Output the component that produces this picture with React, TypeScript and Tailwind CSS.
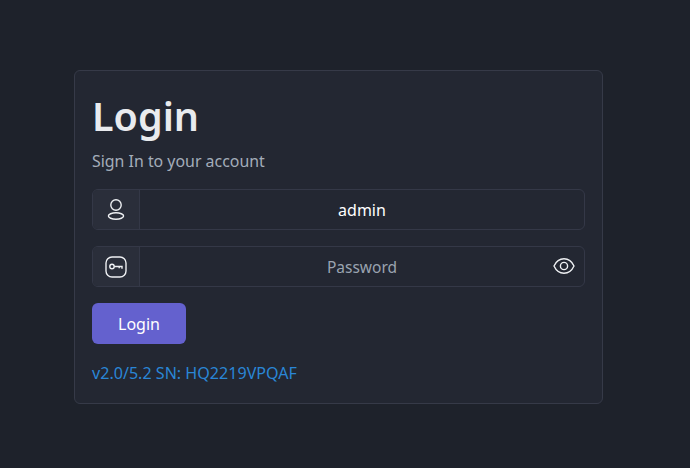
import { useState } from 'react'

function UserIcon() {
  return (
    <svg width="20" height="24" viewBox="0 0 20 24" fill="none" stroke="currentColor" strokeWidth="1.4">
      <circle cx="10" cy="7" r="5.2" />
      <ellipse cx="10" cy="18" rx="7.6" ry="3.2" />
    </svg>
  )
}

function KeyIcon() {
  return (
    <svg width="22" height="22" viewBox="0 0 22 22" fill="none" stroke="currentColor" strokeWidth="1.4">
      <rect x="1" y="1" width="20" height="20" rx="6" />
      <circle cx="7" cy="10.5" r="2.2" />
      <path d="M9.2 10.5H17V12.7M14.2 10.5V12.3" />
    </svg>
  )
}

function EyeIcon() {
  return (
    <svg width="22" height="18" viewBox="0 0 22 18" fill="none" stroke="currentColor" strokeWidth="1.4">
      <path d="M1 9C3.2 4.2 6.8 1.8 11 1.8S18.8 4.2 21 9C18.8 13.8 15.2 16.2 11 16.2S3.2 13.8 1 9Z" />
      <circle cx="11" cy="9" r="3.6" />
    </svg>
  )
}

export default function App() {
  const [password, setPassword] = useState('')
  const [username, setUsername] = useState('admin')
  const [showPassword, setShowPassword] = useState(false)

  return (
    <div className="h-[468px] w-[690px] overflow-hidden bg-[#1e222b] pl-[74px] pt-[70px] font-['Noto_Sans',sans-serif]">
      <div className="h-[334px] w-[529px] rounded-md border border-[#363a48] bg-[#232732] px-[17px] pt-[17px]">
        <h1 className="text-[39.5px] leading-[56px] font-semibold text-[#e9ebee]">Login</h1>
        <p className="mt-[5px] text-[15.9px] leading-[24px] text-[#a3adba]">Sign In to your account</p>

        <div className="mt-[16px] flex h-[41px] overflow-hidden rounded-md border border-[#343847]">
          <span className="flex w-[47px] shrink-0 items-center justify-center border-r border-[#343847] bg-[#2a2e3a] text-[#eef0f3]">
            <UserIcon />
          </span>
          <input
            value={username}
            onChange={(e) => setUsername(e.target.value)}
            className="min-w-0 flex-1 bg-transparent text-center text-[16px] text-white outline-none"
          />
        </div>

        <div className="relative mt-[16px] flex h-[41px] overflow-hidden rounded-md border border-[#343847]">
          <span className="flex w-[47px] shrink-0 items-center justify-center border-r border-[#343847] bg-[#2a2e3a] text-[#eef0f3]">
            <KeyIcon />
          </span>
          <input
            type={showPassword ? 'text' : 'password'}
            value={password}
            onChange={(e) => setPassword(e.target.value)}
            placeholder="Password"
            className="min-w-0 flex-1 bg-transparent text-center text-[16px] text-white outline-none placeholder:text-[15.5px] placeholder:text-[#9aa3b0]"
          />
          <button
            type="button"
            aria-label="Show password"
            onClick={() => setShowPassword(!showPassword)}
            className="absolute right-[9px] top-[10px] text-[#eef0f3]"
          >
            <EyeIcon />
          </button>
        </div>

        <button className="mt-[16px] block h-[41px] w-[94px] rounded-md bg-[#6461ce] text-[16px] text-white">
          Login
        </button>

        <p className="mt-[17px] text-[16.1px] leading-[25px] text-[#2a86d6]">v2.0/5.2 SN: HQ2219VPQAF</p>
      </div>
    </div>
  )
}
